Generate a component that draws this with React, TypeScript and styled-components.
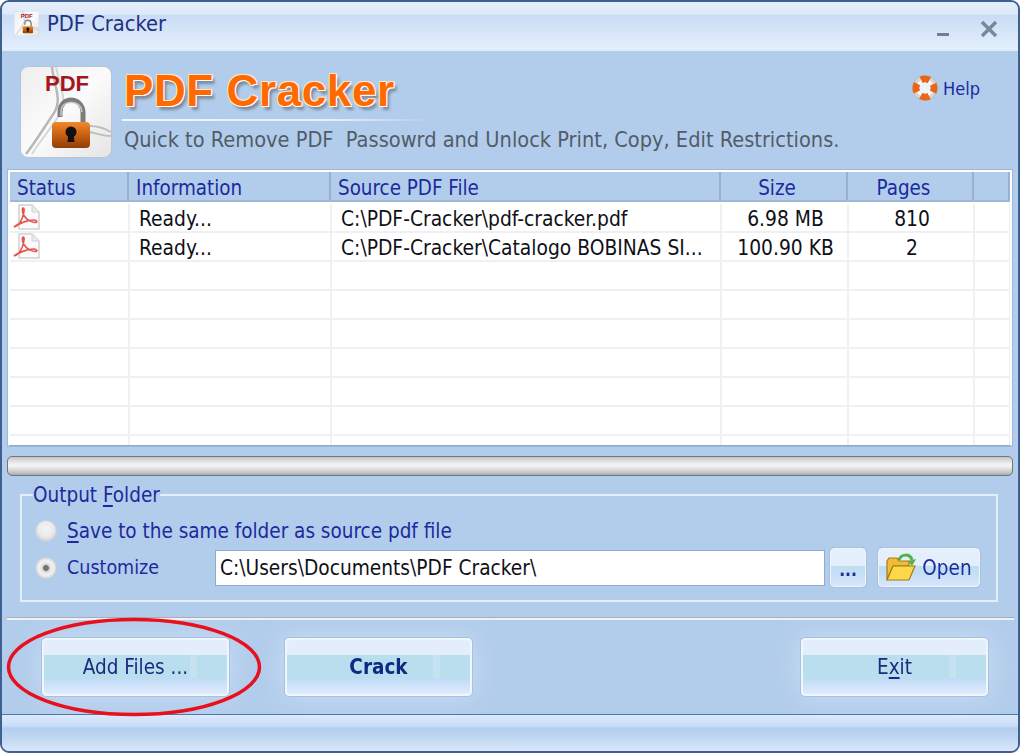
import React from "react";
import styled, { createGlobalStyle } from "styled-components";

const Global = createGlobalStyle`
  html, body { margin: 0; padding: 0; background: #fff; overflow: hidden; }
  * { box-sizing: border-box; }
`;

const FONT = `"DejaVu Sans Condensed", "DejaVu Sans", sans-serif`;

const Window = styled.div`
  position: relative;
  width: 1020px;
  height: 753px;
  display: flex;
  flex-direction: column;
  background: #b2cdeb;
  border: 2px solid #3d6090;
  border-radius: 9px;
  overflow: hidden;
  font-family: ${FONT};
  font-stretch: condensed;
  font-size: 20.7px;
  color: #14147e;
  filter: blur(0.35px);
`;

const TitleBar = styled.div`
  height: 49px;
  flex: none;
  display: flex;
  align-items: center;
  padding: 0 20px 4px 12px;
  gap: 8px;
  background: linear-gradient(#e4eefb 0, #dfeafa 12px, #c9dcf5 13px, #e2eefc 46px, #eef5fe 49px);
  border-bottom: 2px solid #dfeafa;
`;

const TitleText = styled.span`
  flex: 1;
  font-size: 21.7px;
  color: #23307f;
`;

const WinControls = styled.div`
  display: flex;
  align-items: flex-end;
  gap: 30px;
  margin-top: 10px;
`;

const Header = styled.div`
  height: 119px;
  flex: none;
  display: flex;
  padding: 15px 38px 0 18px;
  gap: 12px;
`;

const HeaderText = styled.div`
  flex: 1;
  display: flex;
  flex-direction: column;
`;

const Brand = styled.div`
  font-family: "Liberation Sans", Arial, sans-serif;
  font-stretch: normal;
  font-weight: 700;
  font-size: 44px;
  line-height: 48px;
  height: 49px;
  margin-top: 1px;
  color: #ff6a00;
  letter-spacing: 0.6px;
  text-shadow: 1px 1px 0 #fff, -1px -1px 0 #ffe6cf, 1px -1px 0 #ffe6cf, -1px 1px 0 #ffe6cf, 3px 4px 3px #7d8a9b;
`;

const Rule = styled.div`
  width: 304px;
  height: 2px;
  margin: 3px 0 0 -2px;
  background: linear-gradient(90deg, #f2f7fd, #e5eefb 70%, #b8cdec);
`;

const Tagline = styled.div`
  margin-top: 5px;
  font-size: 21.6px;
  line-height: 28px;
  color: #525c68;
  white-space: pre;
`;

const HelpLink = styled.div`
  display: flex;
  align-items: center;
  align-self: flex-start;
  gap: 5px;
  height: 28px;
  margin-top: 8px;
  font-size: 18px;
  color: #1c2a9e;
`;

const TableFrame = styled.div`
  margin: 0 6px;
  height: 276px;
  flex: none;
  background: #fff;
  border: 1px solid #8ea9cc;
  border-top: 2px solid #fff;
  border-left: 2px solid #fff;
  border-right: 2px solid #fff;
  outline: 1px solid #9db7d8;
  overflow: hidden;
`;

const COLS = "119px 202px 390px 127px 126px 1fr";

const HeadRow = styled.div`
  display: grid;
  grid-template-columns: ${COLS};
  height: 30px;
  background: #b2cdeb;
  border-bottom: 2px solid #a0b7d6;
`;

const HeadCell = styled.div<{ $center?: boolean }>`
  display: flex;
  align-items: center;
  justify-content: ${(p) => (p.$center ? "center" : "flex-start")};
  padding: 3px ${(p) => (p.$center ? "20px" : "0")} 0 7px;
  border-right: 2px solid #98b1d2;
  font-size: 20.4px;
  color: #1c2a9e;
`;

const Body = styled.div`
  padding-top: 2px;
`;

const Row = styled.div`
  display: grid;
  grid-template-columns: ${COLS};
  height: 29px;
  border-bottom: 2px solid #eef0f2;
`;

const FillRow = styled(Row)`
  height: 11px;
  border-bottom: none;
`;

const Cell = styled.div<{ $center?: boolean }>`
  display: flex;
  align-items: center;
  justify-content: ${(p) => (p.$center ? "center" : "flex-start")};
  padding: 3px 0 0 ${(p) => (p.$center ? "3px" : "10px")};
  margin-right: -1px;
  border-right: 2px solid #eef0f2;
  font-size: 20.8px;
  color: #101018;
  white-space: nowrap;
  overflow: hidden;
`;

const StatusCell = styled(Cell)`
  padding: 0 0 0 3px;
`;

const Progress = styled.div`
  margin: 10px 5px 0;
  height: 20px;
  flex: none;
  border: 1px solid #6f7680;
  border-radius: 5px;
  background: linear-gradient(#c4c4c4, #eeeeee 35%, #f4f4f4 50%, #c6c6c6 85%, #a9a9a9);
`;

const Group = styled.fieldset`
  margin: 7px 20px 0 18px;
  padding: 0 0 0 13px;
  height: 119px;
  flex: none;
  border: 2px solid #e4eefb;
  min-inline-size: 0;
  font-size: 20.5px;
  color: #1c2a9e;
`;

const Legend = styled.legend`
  padding: 0;
  margin-left: -2px;
  line-height: 24px;
  font-size: 20.5px;
`;

const Key = styled.span`
  text-decoration: underline;
  text-underline-offset: 3px;
`;

const OptionRow = styled.div`
  display: flex;
  align-items: center;
  height: 37px;
`;

const FirstOption = styled(OptionRow)`
  margin-top: 5px;
`;

const Radio = styled.span<{ $on?: boolean }>`
  width: 22px;
  height: 22px;
  flex: none;
  margin-right: 10px;
  border-radius: 50%;
  border: 1px solid #c9d0d8;
  background: ${(p) =>
    p.$on
      ? "radial-gradient(circle, #6d6d6d 0, #7c7c7c 18%, #dcdcdc 26%, #f2f2f2 50%, #bdbdbd 100%)"
      : "radial-gradient(circle at 50% 40%, #f5f5f5 0, #eaeaea 50%, #bcbcbc 100%)"};
`;

const CustomizeLabel = styled.span`
  width: 148px;
  flex: none;
  font-size: 19.5px;
`;

const PathInput = styled.div`
  width: 610px;
  height: 36px;
  flex: none;
  display: flex;
  align-items: center;
  padding-left: 4px;
  background: #fff;
  border: 1px solid #8fabd0;
  color: #101018;
  font-size: 20.7px;
`;

const SmallButton = styled.div<{ $w: number; $ml: number }>`
  width: ${(p) => p.$w}px;
  height: 39px;
  flex: none;
  margin-left: ${(p) => p.$ml}px;
  display: flex;
  align-items: center;
  justify-content: center;
  gap: 6px;
  border: 1px solid #f0f5fd;
  outline: 1px solid #a9c1e0;
  border-radius: 4px;
  background: linear-gradient(#e6effc 0, #e4eefb 45%, #bedff0 46%, #c4def5 65%, #d8e7fb 100%);
  font-size: 20.5px;
`;

const Dots = styled.span`
  font-weight: 700;
  font-size: 17px;
  margin-top: 4px;
  color: #1c2a9e;
`;

const Separator = styled.div`
  margin: 15px 4px 0 5px;
  height: 3px;
  flex: none;
  background: #f0f3f7;
  border-top: 1px solid #a6adb8;
`;

const ButtonBar = styled.div`
  flex: 1;
  display: flex;
  padding: 18px 30px 0 40px;
`;

const ActionButton = styled.div<{ $bold?: boolean; $ml: number }>`
  width: 187px;
  height: 58px;
  flex: none;
  margin-left: ${(p) => p.$ml}px;
  display: flex;
  align-items: center;
  justify-content: center;
  border: 2px solid #f0f6fe;
  outline: 1px solid #a9c1e0;
  border-radius: 4px;
  background:
    linear-gradient(90deg, transparent 80%, #c6e1ef 80%, #c6e1ef 83.5%, transparent 83.5%) 0 50% / 100% 43% no-repeat,
    linear-gradient(#e4edfc 0, #e4edfc 27%, #b9dfee 28%, #b9dfee 71%, #c3dcf8 74%, #e0ecfd 100%);
  box-shadow: 0 0 26px rgba(226, 238, 255, 0.55);
  font-weight: ${(p) => (p.$bold ? 700 : 400)};
  font-size: 20.5px;
  color: ${(p) => (p.$bold ? "#0d2a80" : "#1c2a80")};
`;

const StatusBar = styled.div`
  height: 37px;
  flex: none;
  border-top: 1px solid #4f79ad;
  background: linear-gradient(#dce9fb 0, #c9dcf7 11px, #b3cef0 13px, #c2d8f3 24px, #dbe8f9 37px);
`;

const Annotation = styled.svg`
  position: absolute;
  left: 2px;
  top: 611px;
  pointer-events: none;
`;

const LogoArt = ({ size, id }: { size: number; id: string }) => (
  <svg width={size} height={size} viewBox="0 0 92 92" style={{ flex: "none" }}>
    <defs>
      <linearGradient id={`${id}-lock`} x1="0" y1="0" x2="0" y2="1">
        <stop offset="0" stopColor="#f08a2c" />
        <stop offset="0.5" stopColor="#c75f10" />
        <stop offset="1" stopColor="#8f3f08" />
      </linearGradient>
      <linearGradient id={`${id}-bg`} x1="0" y1="0" x2="1" y2="1">
        <stop offset="0" stopColor="#eeeeee" />
        <stop offset="0.5" stopColor="#fbfbfb" />
        <stop offset="1" stopColor="#e4e4e4" />
      </linearGradient>
    </defs>
    <rect x="0.5" y="0.5" width="91" height="91" rx="8" fill={`url(#${id}-bg)`} stroke="#b9c4d2" />
    <path d="M32 1C34 22 44 34 32 50C24 62 14 78 6 88" fill="none" stroke="#b8b8b8" strokeWidth="2.5" />
    <path d="M36 1C40 22 50 36 36 54C28 66 18 78 12 88" fill="none" stroke="#d6d6d6" strokeWidth="2" />
    <path d="M70 60C78 60 84 62 91 66M70 66C78 68 84 70 91 70" fill="none" stroke="#bdbdbd" strokeWidth="2" />
    <text x="47" y="25" textAnchor="middle" fontFamily="'Liberation Sans', sans-serif" fontWeight="700" fontSize="22" fill="#a5151c">PDF</text>
    <path d="M40 51V46C40 30 62 30 63 46V57" fill="none" stroke="#7c7c7c" strokeWidth="5" />
    <path d="M41 50V46C41 33 61 33 62 46" fill="none" stroke="#c8c8c8" strokeWidth="1.5" />
    <rect x="32" y="56" width="38" height="26" rx="4" fill={`url(#${id}-lock)`} />
    <circle cx="51" cy="66" r="5.5" fill="#111" />
    <path d="M48.5 68L47.5 76H54.5L53.5 68Z" fill="#111" />
  </svg>
);

const PdfIcon = () => (
  <svg width="28" height="27" viewBox="0 0 28 27" style={{ flex: "none" }}>
    <path d="M6 1H19L26 8V25H6Z" fill="#fbfbfb" stroke="#d2d2d2" strokeWidth="1.5" />
    <path d="M19 1V8H26" fill="#eaeaea" stroke="#d2d2d2" />
    <path
      d="M1 23C6 22 10 15 11 7C11.5 3 9 3 9.5 7C10 13 16 18 22 18.5C25 18.7 24 16 21 16C14 16 5 20 1 23Z"
      fill="none"
      stroke="#e4544c"
      strokeWidth="1.7"
    />
  </svg>
);

const HelpIcon = () => (
  <svg width="26" height="28" viewBox="0 0 26 28" style={{ flex: "none" }}>
    <circle cx="13" cy="14" r="12.5" fill="#d9d4ce" stroke="#b4afa8" strokeWidth="0.6" />
    <circle
      cx="13"
      cy="14"
      r="9"
      fill="#f3f7fc"
      stroke="#e8651a"
      strokeWidth="7"
      strokeDasharray="8.6 5.54"
      strokeDashoffset="4.3"
    />
    <circle cx="13" cy="14" r="5.4" fill="#eef4fb" />
  </svg>
);

const FolderIcon = () => (
  <svg width="30" height="29" viewBox="0 0 30 29" style={{ flex: "none" }}>
    <path d="M13 7C15 1 24 0 26 7" fill="none" stroke="#4fb548" strokeWidth="3" />
    <path d="M22 8L30 6L26 13Z" fill="#4fb548" />
    <path d="M1 27V8L3 5H11L13 8H23V13H7Z" fill="#f0bd3a" stroke="#a17c14" strokeWidth="1.2" />
    <path d="M1 27L7 13H29L23 27Z" fill="#ffd84a" stroke="#a17c14" strokeWidth="1.2" />
  </svg>
);

const rows = [
  { file: "C:\\PDF-Cracker\\pdf-cracker.pdf", size: "6.98 MB", pages: "810" },
  { file: "C:\\PDF-Cracker\\Catalogo BOBINAS SI...", size: "100.90 KB", pages: "2" },
];

const blanks = [0, 1, 2, 3, 4, 5];

const BlankCells = () => (
  <>
    <Cell /><Cell /><Cell /><Cell /><Cell /><Cell />
  </>
);

export default function App() {
  return (
    <>
      <Global />
      <Window>
        <TitleBar>
          <LogoArt size={25} id="small" />
          <TitleText>PDF Cracker</TitleText>
          <WinControls>
            <svg width="14" height="8" viewBox="0 0 14 8"><rect x="1" y="3" width="12" height="3" fill="#6f7f90" /></svg>
            <svg width="18" height="18" viewBox="0 0 18 18">
              <path d="M2 2L16 16M16 2L2 16" stroke="#76889b" strokeWidth="3.4" />
            </svg>
          </WinControls>
        </TitleBar>
        <Header>
          <LogoArt size={92} id="large" />
          <HeaderText>
            <Brand>PDF Cracker</Brand>
            <Rule />
            <Tagline>Quick to Remove PDF  Passowrd and Unlock Print, Copy, Edit Restrictions.</Tagline>
          </HeaderText>
          <HelpLink>
            <HelpIcon />
            Help
          </HelpLink>
        </Header>
        <TableFrame>
          <HeadRow>
            <HeadCell>Status</HeadCell>
            <HeadCell>Information</HeadCell>
            <HeadCell>Source PDF File</HeadCell>
            <HeadCell $center>Size</HeadCell>
            <HeadCell $center>Pages</HeadCell>
            <HeadCell />
          </HeadRow>
          <Body>
            {rows.map((r) => (
              <Row key={r.file}>
                <StatusCell><PdfIcon /></StatusCell>
                <Cell>Ready...</Cell>
                <Cell>{r.file}</Cell>
                <Cell $center>{r.size}</Cell>
                <Cell $center>{r.pages}</Cell>
                <Cell />
              </Row>
            ))}
            {blanks.map((b) => (
              <Row key={b}><BlankCells /></Row>
            ))}
            <FillRow><BlankCells /></FillRow>
          </Body>
        </TableFrame>
        <Progress />
        <Group>
          <Legend>Output <Key>F</Key>older</Legend>
          <FirstOption>
            <Radio />
            <span><Key>S</Key>ave to the same folder as source pdf file</span>
          </FirstOption>
          <OptionRow>
            <Radio $on />
            <CustomizeLabel>Customize</CustomizeLabel>
            <PathInput>C:\Users\Documents\PDF Cracker\</PathInput>
            <SmallButton $w={36} $ml={5}><Dots>...</Dots></SmallButton>
            <SmallButton $w={102} $ml={12}><FolderIcon />Open</SmallButton>
          </OptionRow>
        </Group>
        <Separator />
        <ButtonBar>
          <ActionButton $ml={0}>Add Files ...</ActionButton>
          <ActionButton $ml={56} $bold>Crack</ActionButton>
          <ActionButton $ml={329}>E<Key>x</Key>it</ActionButton>
        </ButtonBar>
        <StatusBar />
        <Annotation width="264" height="110" viewBox="0 0 264 110">
          <ellipse cx="130" cy="54" rx="125.5" ry="47.5" fill="none" stroke="#e8101c" strokeWidth="3.5" />
        </Annotation>
      </Window>
    </>
  );
}
